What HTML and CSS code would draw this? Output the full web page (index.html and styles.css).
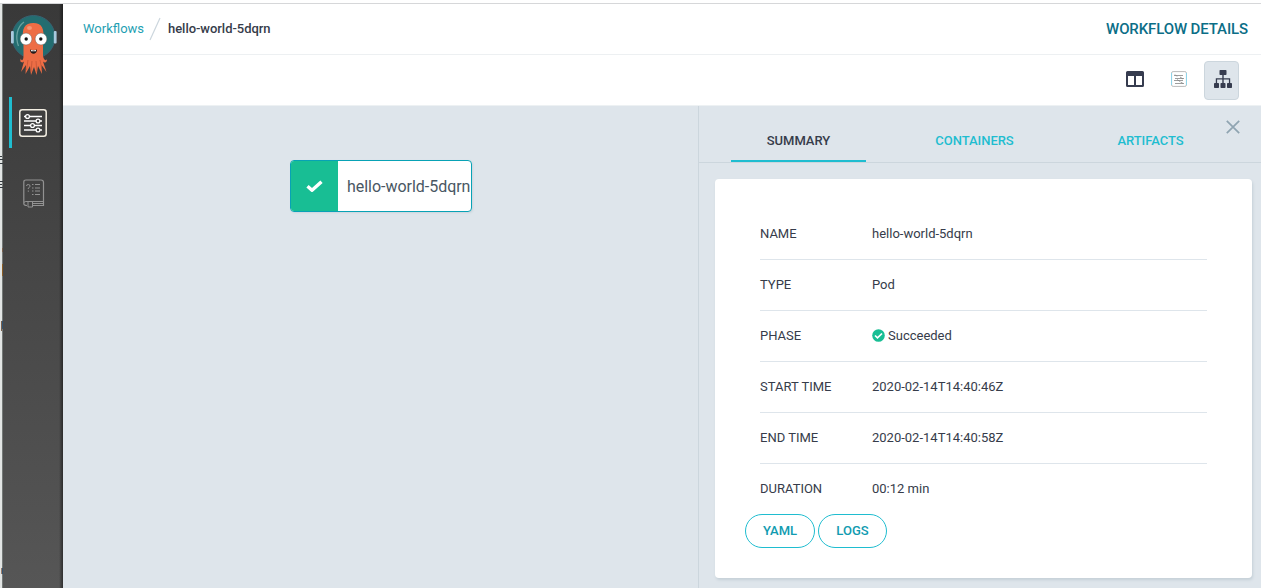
FILE: index.html
```html
<!DOCTYPE html>
<html lang="en">
<head>
<meta charset="utf-8">
<title>Workflow Details</title>
<link rel="stylesheet" href="styles.css">
</head>
<body>
<div class="app">
  <div class="edge">
    <svg width="3" height="584" viewBox="0 4 3 584">
      <path d="M0 156.500h2M0 159.500h3M0 163.500h3M0 181.500h3M0 184.500h2M0 187.500h3" stroke="#343a3f"/>
      <path d="M2 248h1v4h-1zM1 321h1v10h-1z" fill="#795f4b"/>
      <path d="M2 264h1v12h-1z" fill="#8a5c24"/>
      <path d="M2 321h1v8h-1zM2 568h1v6h-1z" fill="#315371"/>
      <path d="M1 568h1v6h-1z" fill="#9b7c68"/>
    </svg>
  </div>
  <nav class="sidebar">
    <svg class="logo" width="48" height="62" viewBox="0 0 48 62">
      <circle cx="23.500" cy="23" r="21.500" fill="#236d70" stroke="#386273" stroke-width="1"/>
      <path d="M8.500 32C5 23 7 13 14 8" fill="none" stroke="#68a2a0" stroke-width="1.300"/>
      <rect x="1" y="17" width="2.800" height="12.500" rx="1" fill="#a9c9de"/>
      <rect x="43.800" y="17" width="2.800" height="12.500" rx="1" fill="#a9c9de"/>
      <path d="M13.500 28C11 14 15 9 23.300 9S35 14 33 28V42C34 47 37 47 36.500 44.500C38 48 35 49.500 33 47.500L36.500 58L31.500 51L32 60L28 52L26.500 61L24 53L21 61L20 52L15.500 60L16 51L11 58L14 47.500C12 49.500 9 48 11 44.500C11 47 13.500 47 13.500 42Z" fill="#ed6d45"/>
      <path d="M18 46l-1.500 10M22 47l-1 11M26 47l.8 11M30 46l2 10" stroke="#b64b30" stroke-width=".6"/>
      <ellipse cx="19.500" cy="14" rx="2.500" ry="2" fill="#f39775"/>
      <circle cx="16" cy="25" r="5.900" fill="#fff" stroke="#5b4c44" stroke-width=".4"/>
      <circle cx="31" cy="25" r="5.900" fill="#fff" stroke="#5b4c44" stroke-width=".4"/>
      <circle cx="16.200" cy="25" r="1.700" fill="#151515"/>
      <circle cx="30.800" cy="25" r="1.700" fill="#151515"/>
      <path d="M20 35.500q3.500 1 7 0c0 5.800-7 5.800-7 0z" fill="#231a1a"/>
      <path d="M21 36q2.500 .8 5 0v1.300h-5z" fill="#fff"/>
    </svg>
    <div class="nav-item nav-item-active">
      <svg width="28" height="28" viewBox="0 0 28 28" fill="none" stroke="#fff">
        <rect x=".8" y=".8" width="26.400" height="26.400" rx="2.500" stroke="#f3eee2" stroke-width="1.500"/>
        <path d="M5 7.500h18M5 12h18M5 16.500h18M5 21h18" stroke-width="1.300"/>
        <g fill="#3c3c3c" stroke-width="1.300"><circle cx="8.500" cy="7.500" r="1.900"/><circle cx="19" cy="12" r="1.900"/><circle cx="13.500" cy="16.500" r="1.900"/><circle cx="19" cy="21" r="1.900"/></g>
      </svg>
    </div>
    <div class="nav-item nav-item-docs">
      <svg width="22" height="30" viewBox="0 0 22 30" fill="none" stroke="#929292">
        <path d="M.8 25V3Q.8 1 3 1H18Q20.500 1 20.500 3.500V26.500H10M.8 24.500Q1 22.500 3 22.500H20.500M4 26.500Q.8 26.500 .8 24.500" stroke-width="1.200"/>
        <path d="M5 22.500v5.500h4.500v-5.500M10 24.500h10"/>
        <path d="M3.500 7q0-1.500 1.800-1.500T7 7.200Q7 8.300 5.300 9v1M5.300 11.500v1.300M9 5.500h1.500M12 5.500h5M9 9h1.500M12 9h5M9 12h1.500M12 12h5M9 15.500h1.500M12 15.500h5"/>
      </svg>
    </div>
  </nav>
  <main class="page">
    <header class="topbar">
      <div class="breadcrumbs">
        <a class="crumb-link">Workflows</a>
        <svg class="slash" width="12" height="24" viewBox="0 0 12 24"><path d="M1 23L11 1" stroke="#ccd6dd" stroke-width="1.200"/></svg>
        <span class="crumb-current">hello-world-5dqrn</span>
      </div>
      <h1 class="page-title">WORKFLOW DETAILS</h1>
    </header>
    <div class="toolbar">
      <a class="tool">
        <svg width="18" height="16" viewBox="0 0 18 16"><path fill="#363c4f" fill-rule="evenodd" d="M1.500 0h15Q18 0 18 1.500v13Q18 16 16.500 16h-15Q0 16 0 14.500v-13Q0 0 1.500 0zM2 5v9h6V5zM10 5v9h6V5z"/></svg>
      </a>
      <a class="tool">
        <svg width="16" height="16" viewBox="0 0 16 16" fill="none"><rect x=".6" y=".6" width="14.800" height="14.800" rx="1.500" stroke="#bbb"/><path d="M.5 2v12M15.500 2v12" stroke="#8fd4e9"/><path d="M3 4.500h9M4 7.500h9M3 9.500h9M4 12.500h9" stroke="#858585" stroke-width=".8"/><path d="M4 3.500l2 2M9 6l3 2M6 8.500l3 2M9.500 11l2.500 1.500" stroke="#858585" stroke-width=".8"/></svg>
      </a>
      <a class="tool tool-active">
        <svg width="18" height="18" viewBox="0 0 18 18" fill="#363c4f"><rect x="5.500" y="0" width="7" height="5" rx=".7"/><path d="M8.300 5h1.400v3.300h6.500v5h-1.300V9.600H9.700v3.700H8.300V9.600H3.100v3.700H1.800v-5h6.500z"/><rect x="0" y="13" width="5" height="5" rx=".7"/><rect x="6.500" y="13" width="5" height="5" rx=".7"/><rect x="13" y="13" width="5" height="5" rx=".7"/></svg>
      </a>
    </div>
    <div class="content">
      <section class="graph">
        <div class="node">
          <div class="node-status"><svg width="17" height="13" viewBox="0 0 17 13"><path d="M1.500 6.300L6 10.300L15.500 1.700" fill="none" stroke="#fff" stroke-width="3.400" stroke-linejoin="round"/></svg></div>
          <div class="node-title">hello-world-5dqrn</div>
        </div>
      </section>
      <aside class="details">
        <svg class="close" width="14" height="14" viewBox="0 0 14 14"><path d="M.8 .8l12.400 12.400M13.200 .8L.8 13.200" stroke="#8fa4b1" stroke-width="1.700"/></svg>
        <div class="tabs">
          <a class="tab tab-active">SUMMARY</a>
          <a class="tab">CONTAINERS</a>
          <a class="tab">ARTIFACTS</a>
        </div>
        <div class="card">
          <div class="rows">
            <div class="row"><span>NAME</span><span>hello-world-5dqrn</span></div>
            <div class="row"><span>TYPE</span><span>Pod</span></div>
            <div class="row"><span>PHASE</span><span class="phase"><svg width="13" height="13" viewBox="0 0 13 13"><circle cx="6.500" cy="6.500" r="6.300" fill="#18be94"/><path d="M3 6.500l2.500 2.400L10 4.500" fill="none" stroke="#fff" stroke-width="1.700"/></svg>Succeeded</span></div>
            <div class="row"><span>START TIME</span><span>2020-02-14T14:40:46Z</span></div>
            <div class="row"><span>END TIME</span><span>2020-02-14T14:40:58Z</span></div>
            <div class="row"><span>DURATION</span><span>00:12 min</span></div>
          </div>
          <div class="actions"><button class="button button-yaml">YAML</button><button class="button button-logs">LOGS</button></div>
        </div>
      </aside>
    </div>
  </main>
</div>
</body>
</html>
```
FILE: styles.css
```css
* { box-sizing: border-box; }
body {
  margin: 0;
  font-family: Roboto, "Liberation Sans", sans-serif;
  font-size: 13px;
  color: #363c4a;
  background: #fff;
  overflow: hidden;
}
svg { display: block; flex: none; }
.app { display: flex; height: 588px; padding-top: 4px; background: linear-gradient(#fff 3px, #d6d7d9 3px, #d6d7d9 4px, #fff 4px); }
.edge { width: 3px; background: linear-gradient(90deg, #e2e5e4 2px, #747977 2px); }
.sidebar {
  width: 60px;
  background: linear-gradient(90deg, transparent 56px, rgba(0,0,0,.45)), linear-gradient(#393939, #565656);
}
.logo { margin: 10px 0 0 7px; }
.nav-item { display: flex; align-items: center; }
.nav-item-active { height: 51px; margin: 21px 0 0 6px; padding-left: 7px; border-left: 3px solid #1fbdd0; }
.nav-item-docs { margin: 31px 0 0 20px; }
.page { flex: 1; min-width: 0; display: flex; flex-direction: column; }
.topbar { height: 51px; display: flex; align-items: center; justify-content: space-between; padding: 0 13px 0 20px; border-bottom: 1px solid #edf0f2; }
.breadcrumbs { display: flex; align-items: center; }
.crumb-link { color: #1f9fb3; width: 66px; padding-bottom: 2px; }
.slash { margin-right: 7px; }
.crumb-current { font-weight: 500; letter-spacing: -.04px; padding-bottom: 2px; }
.page-title { margin: 0; font-size: 15px; font-weight: 500; letter-spacing: -.12px; color: #0b6e87; white-space: nowrap; }
.toolbar { height: 51px; display: flex; align-items: center; justify-content: flex-end; gap: 9px; padding-right: 22px; border-bottom: 1px solid #edf1f3; }
.tool { width: 35px; height: 39px; display: flex; align-items: center; justify-content: center; padding: 0 0 2px 2px; }
.tool-active { background: #dee5eb; border: 1px solid #ccd6dd; border-radius: 4px; }
.content { flex: 1; display: flex; background: #dee5eb; }
.graph { width: 635px; padding: 54px 0 0 227px; }
.node { width: 182px; height: 52px; display: flex; border: 1px solid #08a2b5; border-radius: 4px; overflow: hidden; background: #fff; box-shadow: 1px 1px 2px #ccd6dd; }
.node-status { width: 47px; display: flex; align-items: center; justify-content: center; background: #18be94; }
.node-title { flex: 1; padding-left: 9px; line-height: 51px; font-size: 16px; letter-spacing: -.03px; color: #495763; white-space: nowrap; }
.details { position: relative; flex: 1; border-left: 1px solid #ccd6dd; }
.close { position: absolute; right: 21px; top: 14px; }
.tabs { height: 57px; display: flex; padding-left: 32px; gap: 41px; border-bottom: 1px solid #ccd6dd; }
.tab { width: 135px; padding-top: 14px; line-height: 41px; text-align: center; font-weight: 500; letter-spacing: -.03px; color: #1fbdd0; }
.tab-active { height: 56px; color: #363c4a; border-bottom: 2px solid #1fbdd0; }
.card { width: 537px; height: 399px; margin: 16px 0 0 16px; padding: 30px 45px 0; background: #fff; border-radius: 4px; box-shadow: 1px 2px 3px #c5d0d7; }
.row { height: 51px; display: grid; grid-template-columns: 112px 1fr; align-items: center; padding-bottom: 1px; border-bottom: 1px solid #dee5eb; }
.row:last-child { height: 50px; border-bottom: 0; }
.phase { display: flex; align-items: center; gap: 3px; }
.actions { display: flex; gap: 3px; margin-left: -15px; }
.button { height: 34px; padding: 0 0 2px; background: #fff; border: 1px solid #1fbdd0; border-radius: 17px; font: 500 13px Roboto, "Liberation Sans", sans-serif; color: #119bb0; }
.button-yaml { width: 70px; }
.button-logs { width: 69px; }
```
